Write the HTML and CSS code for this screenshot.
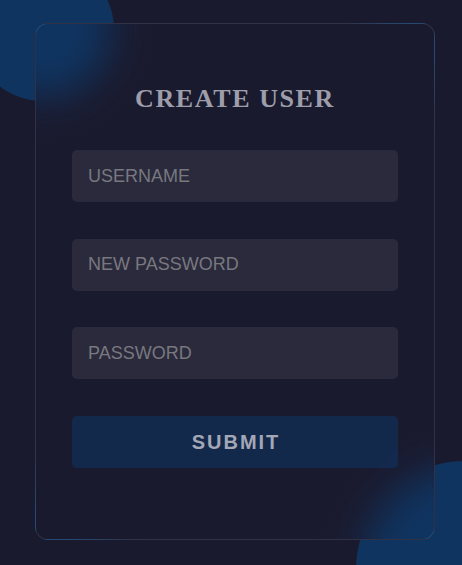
FILE: index.html
```html
<!DOCTYPE html>
<html lang="en">
<head>
<meta charset="utf-8">
<title>Create User</title>
<link rel="stylesheet" href="styles.css">
</head>
<body>
<main class="page">
  <form class="card">
    <h1 class="title">CREATE USER</h1>
    <div class="fields">
      <input class="field" type="text" placeholder="USERNAME">
      <input class="field" type="password" placeholder="NEW PASSWORD">
      <input class="field" type="password" placeholder="PASSWORD">
      <button class="submit" type="button">SUBMIT</button>
    </div>
  </form>
</main>
</body>
</html>
```
FILE: styles.css
```css
html, body {
  margin: 0;
  padding: 0;
}
html {
  background: #1a1a2e;
}
body {
  width: 462px;
  height: 565px;
  overflow: hidden;
  background:
    radial-gradient(circle at 43px 30px, #0f3460 70.5px, rgba(15, 52, 96, 0) 71.5px),
    radial-gradient(circle at 465px 570px, #0f3460 108.5px, rgba(15, 52, 96, 0) 109.5px),
    #1a1a2e;
  font-family: "Liberation Sans", Arial, sans-serif;
}
.page {
  padding: 23px 0 0 35px;
}
.card {
  box-sizing: border-box;
  width: 400px;
  height: 517px;
  margin: 0;
  padding: 60px 36px 0;
  border: 1px solid rgba(255, 255, 255, 0.1);
  border-radius: 13px;
  background:
    radial-gradient(circle at 7px 6px,
      rgba(15, 52, 96, 1) 29px,
      rgba(15, 52, 96, 0.84) 47px,
      rgba(15, 52, 96, 0.5) 65px,
      rgba(15, 52, 96, 0.16) 83px,
      rgba(15, 52, 96, 0.02) 101px,
      rgba(15, 52, 96, 0) 115px),
    radial-gradient(circle at 429px 546px,
      rgba(15, 52, 96, 1) 65px,
      rgba(15, 52, 96, 0.84) 83px,
      rgba(15, 52, 96, 0.5) 101px,
      rgba(15, 52, 96, 0.16) 119px,
      rgba(15, 52, 96, 0.02) 137px,
      rgba(15, 52, 96, 0) 151px),
    #1a1a2e;
}
.title {
  margin: 0;
  font-family: "Liberation Serif", "Times New Roman", serif;
  font-size: 26px;
  line-height: 30px;
  font-weight: bold;
  letter-spacing: 1.6px;
  text-align: center;
  color: #9e9eab;
}
.fields {
  display: flex;
  flex-direction: column;
  gap: 36.7px;
  margin-top: 36px;
}
.field {
  box-sizing: border-box;
  display: block;
  width: 100%;
  height: 52px;
  margin: 0;
  padding: 0 16px;
  border: none;
  outline: none;
  border-radius: 5px;
  background: rgba(255, 255, 255, 0.07);
  font-family: "Liberation Sans", Arial, sans-serif;
  font-size: 18px;
  color: #c8c8d0;
}
.field::placeholder {
  color: #78787f;
  opacity: 1;
}
.submit {
  box-sizing: border-box;
  display: block;
  width: 100%;
  height: 52px;
  margin: 0;
  padding: 0 0 0 2px;
  border: none;
  border-radius: 5px;
  background: rgba(15, 52, 96, 0.6);
  font-family: "Liberation Sans", Arial, sans-serif;
  font-size: 20px;
  font-weight: bold;
  letter-spacing: 2px;
  color: #a4a7b6;
  cursor: pointer;
}
```
